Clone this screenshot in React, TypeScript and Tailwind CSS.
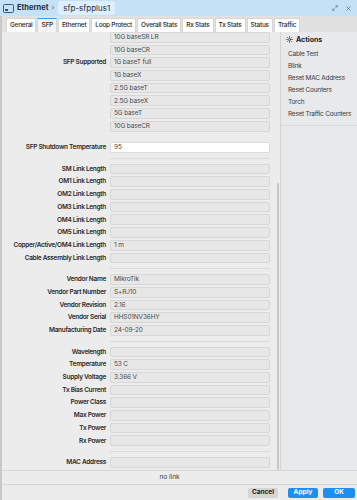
import { Maximize2, X } from "lucide-react";

const tabs = ["General", "SFP", "Ethernet", "Loop Protect", "Overall Stats", "Rx Stats", "Tx Stats", "Status", "Traffic"];

const supported = ["10G baseSR LR", "10G baseCR", "1G baseT full", "1G baseX", "2.5G baseT", "2.5G baseX", "5G baseT", "10G baseCR"];

const linkRows: [string, string][] = [
  ["SM Link Length", ""],
  ["OM1 Link Length", ""],
  ["OM2 Link Length", ""],
  ["OM3 Link Length", ""],
  ["OM4 Link Length", ""],
  ["OM5 Link Length", ""],
  ["Copper/Active/OM4 Link Length", "1 m"],
  ["Cable Assembly Link Length", ""],
];

const vendorRows: [string, string][] = [
  ["Vendor Name", "MikroTik"],
  ["Vendor Part Number", "S+RJ10"],
  ["Vendor Revision", "2.16"],
  ["Vendor Serial", "HHS01NV36HY"],
  ["Manufacturing Date", "24-09-20"],
];

const monitorRows: [string, string][] = [
  ["Wavelength", ""],
  ["Temperature", "53 C"],
  ["Supply Voltage", "3.366 V"],
  ["Tx Bias Current", ""],
  ["Power Class", ""],
  ["Max Power", ""],
  ["Tx Power", ""],
  ["Rx Power", ""],
];

const actions = ["Cable Test", "Blink", "Reset MAC Address", "Reset Counters", "Torch", "Reset Traffic Counters"];

function Row({ label, value, white }: { label: string; value: string; white?: boolean }) {
  return (
    <div className="flex h-[10.7px] items-center">
      <div className="w-[104px] whitespace-nowrap text-right font-semibold tracking-[-0.3px] text-[#2a2a2a]">{label}</div>
      <div
        className={
          "ml-[4px] flex h-full w-[160px] items-center rounded-[2px] border px-[3px] tracking-[-0.15px] text-[#4a4a4a] " +
          (white ? "border-[#dcdcdc] bg-white" : "border-[#d7d7d7] bg-[#e7e7e7]")
        }
      >
        {value}
      </div>
    </div>
  );
}

function Rows({ rows }: { rows: [string, string][] }) {
  return (
    <div className="flex flex-col gap-[2px]">
      {rows.map(([l, v]) => (
        <Row key={l} label={l} value={v} />
      ))}
    </div>
  );
}

function Sep() {
  return <div className="my-[5px] ml-[108px] h-px w-[160px] bg-[#dadada]" />;
}

export default function App() {
  return (
    <div
      className="flex h-[500px] w-[357px] flex-col overflow-hidden bg-[#ececec] text-[6.5px] leading-none text-[#333]"
      style={{ fontFamily: "Inter, 'Noto Sans', sans-serif" }}
    >
      {/* title bar */}
      <div className="flex h-[16px] shrink-0 items-center bg-[#c5e1f6] pl-[3px] pr-[5px]">
        <svg width="11" height="9" viewBox="0 0 11 9" fill="none" stroke="#3d5a73" strokeWidth="1">
          <rect x="0.5" y="0.5" width="10" height="8" rx="1" />
          <rect x="2" y="5" width="3" height="2" fill="#3d5a73" stroke="none" />
        </svg>
        <span className="ml-[3px] text-[7.5px] font-bold text-[#1f2d3a]">Ethernet</span>
        <span className="ml-[3px] text-[7.5px] text-[#55687a]">›</span>
        <span className="ml-[4px] rounded-[3px] bg-[#deeefa] px-[5px] py-[3px] text-[8px] text-[#1f2d3a]">sfp-sfpplus1</span>
        <div className="flex-1" />
        <Maximize2 size={6} strokeWidth={2} className="text-[#4a5a68]" />
        <X size={7} strokeWidth={2} className="ml-[7px] text-[#4a5a68]" />
      </div>

      <div className="flex min-h-0 flex-1 flex-col border-l-2 border-[#c9c9c9]">
        {/* tabs */}
        <div className="flex h-[16px] shrink-0 items-end gap-px bg-[#e1e1e1] pl-[4px]">
          {tabs.map((t) => (
            <div
              key={t}
              className={
                "flex h-[14px] items-center border-x border-t px-[3px] font-medium tracking-[-0.25px] text-[#2a2a2a] " +
                (t === "SFP" ? "border-x-[#d6d6d6] border-t-[#3d9be9] bg-[#f3f3f3]" : "border-[#d6d6d6] bg-white")
              }
            >
              {t}
            </div>
          ))}
        </div>

        {/* body */}
        <div className="flex min-h-0 flex-1">
          <div className="flex w-[278px] shrink-0">
            <div className="flex w-[270px] flex-col">
              <div className="flex flex-col gap-[2px]">
                {supported.map((s, i) => (
                  <Row key={s + i} label={i === 2 ? "SFP Supported" : ""} value={s} />
                ))}
              </div>
              <div className="mt-[10.5px]">
                <Row label="SFP Shutdown Temperature" value="95" white />
              </div>
              <Sep />
              <Rows rows={linkRows} />
              <Sep />
              <Rows rows={vendorRows} />
              <Sep />
              <Rows rows={monitorRows} />
              <Sep />
              <Row label="MAC Address" value="" />
            </div>
            <div className="flex w-[8px] flex-col items-end pr-[1px]">
              <div className="h-[151px]" />
              <div className="w-[2px] flex-1 rounded-full bg-[#c6c6c6]" />
            </div>
          </div>

          <div className="flex flex-1 flex-col border-l border-[#d3d3d3] bg-[#e8e9ea]">
            <div className="mt-[1px] flex h-[12px] items-center pl-[5px]">
              <svg width="7" height="7" viewBox="0 0 24 24" fill="none" stroke="#3a3a3a" strokeWidth="2.6" strokeLinecap="round">
                <circle cx="12" cy="12" r="3.5" />
                <path d="M12 2v3M12 19v3M2 12h3M19 12h3M4.9 4.9l2.1 2.1M17 17l2.1 2.1M4.9 19.1L7 17M17 7l2.1-2.1" />
              </svg>
              <span className="ml-[3px] text-[7px] font-bold text-[#222]">Actions</span>
            </div>
            <div className="mt-[3px] flex flex-col border-b border-[#d8d8d8] pb-[4px]">
              {actions.map((a) => (
                <div key={a} className="flex h-[12.1px] items-center whitespace-nowrap pl-[7px] tracking-[-0.25px] text-[#3a3a3a]">
                  {a}
                </div>
              ))}
            </div>
          </div>
        </div>

        {/* status */}
        <div className="flex h-[15px] shrink-0 items-center justify-center border-y border-[#d6d6d6] pr-[20px] text-[#3a3a3a]">
          no link
        </div>

        {/* footer */}
        <div className="flex h-[15px] shrink-0 items-center justify-end gap-[5px] pr-[2px]">
          <button className="mr-[5px] h-[10px] rounded-[2px] bg-[#d5d5d5] px-[4px] font-bold text-[#222]">Cancel</button>
          <button className="h-[10px] w-[30px] rounded-[2px] bg-[#1e8ff0] font-bold text-white">Apply</button>
          <button className="h-[10px] w-[32px] rounded-[2px] bg-[#1e8ff0] font-bold text-white">OK</button>
        </div>
      </div>
    </div>
  );
}
